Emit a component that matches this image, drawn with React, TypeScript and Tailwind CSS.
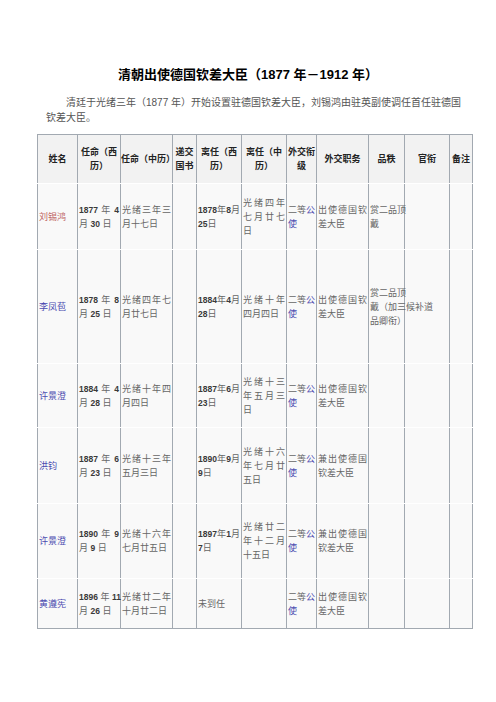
import React from "react";

// column widths, taken from the reference (sum = 435)
const COLS = [40, 43, 52, 24, 45, 45, 30, 52, 36, 45, 23];

const HEADERS: string[][] = [
    ["姓名"],
    ["任命（西", "历）"],
    ["任命（中历）"],
    ["递交", "国书"],
    ["离任（西", "历）"],
    ["离任（中", "历）"],
    ["外交衔", "级"],
    ["外交职务"],
    ["品秩"],
    ["官衔"],
    ["备注"],
];

type Row = {
    h: string;
    name: string;
    nameColor: string;
    cells: string[][];
};

const ROWS: Row[] = [
    {
        h: "h-[66px]",
        name: "刘锡鸿",
        nameColor: "text-[#c06563]",
        cells: [
            ["1877 年 4", "月 30 日"],
            ["光绪三年三", "月十七日"],
            [],
            ["1878年8月", "25日"],
            ["光绪四年", "七月廿七", "日"],
            ["二等{公}", "{使}"],
            ["出使德国钦", "差大臣"],
            ["赏二品顶", "戴"],
            [],
            [],
        ],
    },
    {
        h: "h-[114px]",
        name: "李凤苞",
        nameColor: "text-[#4b4bb0]",
        cells: [
            ["1878 年 8", "月 25 日"],
            ["光绪四年七", "月廿七日"],
            [],
            ["1884年4月", "28日"],
            ["光绪十年", "四月四日"],
            ["二等{公}", "{使}"],
            ["出使德国钦", "差大臣"],
            ["赏二品顶", "戴（加三", "品卿衔）"],
            ["候补道"],
            [],
        ],
    },
    {
        h: "h-[64px]",
        name: "许景澄",
        nameColor: "text-[#4b4bb0]",
        cells: [
            ["1884 年 4", "月 28 日"],
            ["光绪十年四", "月四日"],
            [],
            ["1887年6月", "23日"],
            ["光绪十三", "年五月三", "日"],
            ["二等{公}", "{使}"],
            ["出使德国钦", "差大臣"],
            [],
            [],
            [],
        ],
    },
    {
        h: "h-[76px]",
        name: "洪钧",
        nameColor: "text-[#4b4bb0]",
        cells: [
            ["1887 年 6", "月 23 日"],
            ["光绪十三年", "五月三日"],
            [],
            ["1890年9月", "9日"],
            ["光绪十六", "年七月廿", "五日"],
            ["二等{公}", "{使}"],
            ["兼出使德国", "钦差大臣"],
            [],
            [],
            [],
        ],
    },
    {
        h: "h-[75px]",
        name: "许景澄",
        nameColor: "text-[#4b4bb0]",
        cells: [
            ["1890 年 9", "月 9 日"],
            ["光绪十六年", "七月廿五日"],
            [],
            ["1897年1月", "7日"],
            ["光绪廿二", "年十二月", "十五日"],
            ["二等{公}", "{使}"],
            ["兼出使德国", "钦差大臣"],
            [],
            [],
            [],
        ],
    },
    {
        h: "h-[50px]",
        name: "黄遵宪",
        nameColor: "text-[#4b4bb0]",
        cells: [
            ["1896 年 11", "月 26 日"],
            ["光绪廿二年", "十月廿二日"],
            [],
            ["未到任"],
            [],
            ["二等{公}", "{使}"],
            ["出使德国钦", "差大臣"],
            [],
            [],
            [],
        ],
    },
];

// "{x}" is a link (blue), runs of digits are set bold like the original
const Line = ({ text }: { text: string }) => {
    const parts = text.split(/(\{[^}]*\}|\d+)/).filter((p) => p !== "");
    return (
        <>
            {parts.map((p, i) => {
                if (p.startsWith("{")) return <span key={i} className="text-[#4b4bb0]">{p.slice(1, -1)}</span>;
                if (/^\d+$/.test(p)) return <span key={i} className="font-bold text-[#3a3a3a] text-[8.5px]">{p}</span>;
                return <span key={i}>{p}</span>;
            })}
        </>
    );
};

const CellLines = ({ lines }: { lines: string[] }) => (
    <div>
        {lines.map((l, i) => (
            <div
                key={i}
                className={`whitespace-nowrap ${i < lines.length - 1 ? "text-justify [text-align-last:justify]" : "text-left"}`}
            >
                <Line text={l} />
            </div>
        ))}
    </div>
);

export default function App() {
    return (
        <div className="w-[496px] min-h-[702px] bg-white font-['Liberation_Sans','Noto_Sans_CJK_SC',sans-serif]">
            <h1 className="pt-[65px] text-center text-[13px] leading-[20px] font-bold text-black">
                清朝出使德国钦差大臣（1877 年－1912 年）
            </h1>
            <p className="mt-[10px] pl-[46px] pr-[30px] text-[10px] leading-[15px] text-[#555]">
                <span className="pl-[20px]">清廷于光绪三年（1877 年）开始设置驻德国钦差大臣，刘锡鸿由驻英副使调任首任驻德国</span>
                <br />
                钦差大臣。
            </p>
            <table className="ml-[37px] mt-[9px] w-[435px] table-fixed border-collapse text-[9px] leading-[14px] text-[#666]">
                <colgroup>
                    {COLS.map((w, i) => (
                        <col key={i} style={{ width: w }} />
                    ))}
                </colgroup>
                <thead>
                    <tr className="h-[49px] bg-[#f2f2f2]">
                        {HEADERS.map((h, i) => (
                            <th
                                key={i}
                                className="border border-x-[#a2a9b1] border-t-[#a2a9b1] border-b-white px-0 align-middle text-center font-bold text-[#222]"
                            >
                                {h.map((l, j) => (
                                    <div key={j} className="whitespace-nowrap">{l}</div>
                                ))}
                            </th>
                        ))}
                    </tr>
                </thead>
                <tbody>
                    {ROWS.map((r, ri) => (
                        <tr key={ri} className={`${r.h} bg-[#f9f9f9]`}>
                            <td
                                className={`border border-x-[#a2a9b1] border-t-white ${ri === ROWS.length - 1 ? "border-b-[#a2a9b1]" : "border-b-white"} pl-[1px] align-middle ${r.nameColor}`}
                            >
                                {r.name}
                            </td>
                            {r.cells.map((c, ci) => (
                                <td
                                    key={ci}
                                    className={`border border-x-[#a2a9b1] border-t-white ${ri === ROWS.length - 1 ? "border-b-[#a2a9b1]" : "border-b-white"} px-[1px] align-middle`}
                                >
                                    <CellLines lines={c} />
                                </td>
                            ))}
                        </tr>
                    ))}
                </tbody>
            </table>
        </div>
    );
}
